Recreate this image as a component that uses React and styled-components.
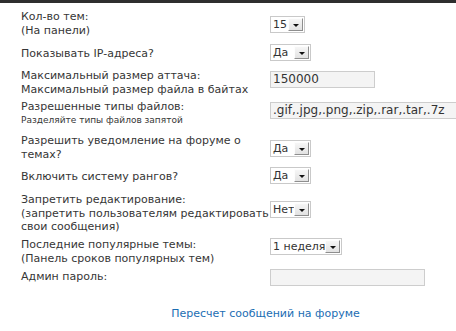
import React from "react";
import styled, { createGlobalStyle } from "styled-components";

const Global = createGlobalStyle`
  html, body { margin: 0; padding: 0; background: #fff; }
  body { font-family: "DejaVu Sans", Verdana, sans-serif; font-size: 11px; color: #363636; overflow: hidden; }
`;

const TopBar = styled.div`
  height: 3px;
  background: #2e2e2e;
`;

const Form = styled.div`
  padding: 0 0 0 21px;
`;

const Row = styled.div`
  display: flex;
  align-items: flex-start;
  margin-top: ${(p) => p.$gap}px;
`;

const LabelCell = styled.div`
  width: 249px;
  flex: none;
  line-height: 14px;
  margin-top: ${(p) => p.$top || 0}px;
`;

const Main = styled.div`
  font-size: 11px;
  line-height: 14px;
`;

const Sub = styled.div`
  font-size: ${(p) => (p.$small ? 9 : 11)}px;
  line-height: ${(p) => (p.$small ? 12 : 13)}px;
`;

const ControlCell = styled.div`
  flex: 1;
  display: flex;
  margin-top: ${(p) => p.$top || 0}px;
  white-space: nowrap;
`;

const Select = styled.div`
  display: flex;
  align-items: stretch;
  height: 15px;
  width: ${(p) => p.$w}px;
  border: 1px solid #c9c9c9;
  background: #fff;
  flex: none;
`;

const SelectText = styled.span`
  flex: 1;
  padding-left: 2px;
  font-size: 11px;
  line-height: 15px;
  color: #333;
  overflow: hidden;
`;

const SelectBtn = styled.span`
  width: 15px;
  flex: none;
  margin: 1px 1px 1px 0;
  box-sizing: border-box;
  background: linear-gradient(#f6f6f6, #e2e2e2);
  border-top: 1px solid #fdfdfd;
  border-left: 1px solid #fdfdfd;
  border-right: 1px solid #8e8e8e;
  border-bottom: 1px solid #8e8e8e;
  display: flex;
  align-items: center;
  justify-content: center;
  &::after {
    content: "";
    margin-top: 1px;
    border-left: 3px solid transparent;
    border-right: 3px solid transparent;
    border-top: 3px solid #111;
  }
`;

const Input = styled.div`
  width: ${(p) => p.$w}px;
  height: 15px;
  border: 1px solid #cdcdcd;
  background: #f4f4f4;
  font-size: 12px;
  line-height: 15px;
  padding-left: 2px;
  color: #333;
  flex: none;
  overflow: hidden;
`;

const LinkRow = styled.div`
  margin-top: 21px;
  padding-left: 54px;
  text-align: center;
  line-height: 14px;
`;

const Link = styled.a`
  color: #1b6db3;
  text-decoration: none;
  font-size: 11px;
`;

const Drop = ({ w, value }) => (
  <Select $w={w}>
    <SelectText>{value}</SelectText>
    <SelectBtn />
  </Select>
);

export default function App() {
  return (
    <>
      <Global />
      <TopBar />
      <Form>
        <Row $gap={7}>
          <LabelCell>
            <Main>Кол-во тем:</Main>
            <Main>(На панели)</Main>
          </LabelCell>
          <ControlCell $top={6}>
            <Drop w={33} value="15" />
          </ControlCell>
        </Row>
        <Row $gap={6}>
          <LabelCell $top={3}>
            <Main>Показывать IP-адреса?</Main>
          </LabelCell>
          <ControlCell>
            <Drop w={39} value="Да" />
          </ControlCell>
        </Row>
        <Row $gap={8}>
          <LabelCell>
            <Main>Максимальный размер аттача:</Main>
            <Sub>Максимальный размер файла в байтах</Sub>
          </LabelCell>
          <ControlCell $top={2}>
            <Input $w={101}>150000</Input>
          </ControlCell>
        </Row>
        <Row $gap={4}>
          <LabelCell>
            <Main>Разрешенные типы файлов:</Main>
            <Sub $small>Разделяйте типы файлов запятой</Sub>
          </LabelCell>
          <ControlCell $top={2}>
            <Input $w={200}>.gif,.jpg,.png,.zip,.rar,.tar,.7z</Input>
          </ControlCell>
        </Row>
        <Row $gap={8}>
          <LabelCell>
            <Main>Разрешить уведомление на форуме о темах?</Main>
          </LabelCell>
          <ControlCell $top={6}>
            <Drop w={39} value="Да" />
          </ControlCell>
        </Row>
        <Row $gap={5}>
          <LabelCell $top={3}>
            <Main>Включить систему рангов?</Main>
          </LabelCell>
          <ControlCell>
            <Drop w={39} value="Да" />
          </ControlCell>
        </Row>
        <Row $gap={9}>
          <LabelCell>
            <Main>Запретить редактирование:</Main>
            <Sub>(запретить пользователям редактировать свои сообщения)</Sub>
          </LabelCell>
          <ControlCell $top={8}>
            <Drop w={39} value="Нет" />
          </ControlCell>
        </Row>
        <Row $gap={5}>
          <LabelCell>
            <Main>Последние популярные темы:</Main>
            <Sub>(Панель сроков популярных тем)</Sub>
          </LabelCell>
          <ControlCell>
            <Drop w={70} value="1 неделя" />
          </ControlCell>
        </Row>
        <Row $gap={4}>
          <LabelCell $top={1}>
            <Main>Админ пароль:</Main>
          </LabelCell>
          <ControlCell>
            <Input $w={151} />
          </ControlCell>
        </Row>
        <LinkRow>
          <Link href="#">Пересчет сообщений на форуме</Link>
        </LinkRow>
      </Form>
    </>
  );
}
